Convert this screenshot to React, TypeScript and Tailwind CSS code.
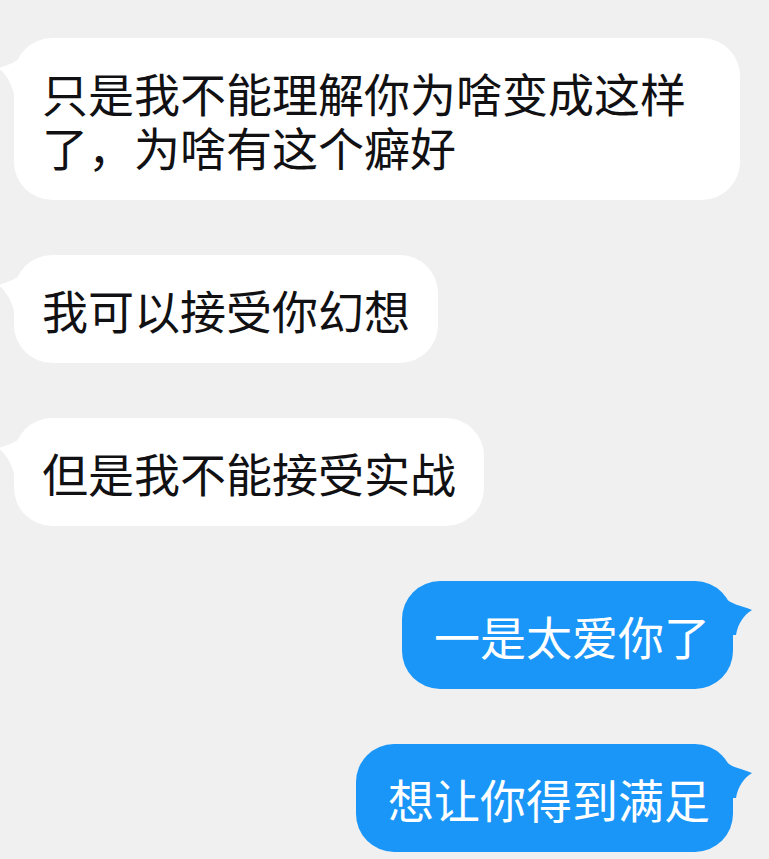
const messages: { id: number; text: string; mine: boolean }[] = [
  { id: 1, text: "只是我不能理解你为啥变成这样了，为啥有这个癖好", mine: false },
  { id: 2, text: "我可以接受你幻想", mine: false },
  { id: 3, text: "但是我不能接受实战", mine: false },
  { id: 4, text: "一是太爱你了", mine: true },
  { id: 5, text: "想让你得到满足", mine: true },
];

const TailLeft = () => (
  <svg
    className="absolute -left-[16px] top-[16px]"
    width="26"
    height="42"
    viewBox="0 0 26 42"
  >
    <path d="M26 2 C18 8 9 12 0 14 C7 19 13 28 16 40 L26 40 Z" fill="#ffffff" />
  </svg>
);

const TailRight = () => (
  <svg
    className="absolute -right-[19px] top-[14px]"
    width="28"
    height="42"
    viewBox="0 0 28 42"
  >
    <path d="M0 2 C8 10 16 10 28 15 C20 20 14 28 12 40 L0 40 Z" fill="#1a96f8" />
  </svg>
);

const Bubble = ({ text, mine }: { text: string; mine: boolean }) => {
  if (mine) {
    return (
      <div className="flex justify-end pr-[36px]">
        <div className="relative max-w-[726px] rounded-[38px] bg-[#1a96f8] pl-[32px] pr-[23px] py-[27px] text-white">
          <TailRight />
          <span className="relative">{text}</span>
        </div>
      </div>
    );
  }
  return (
    <div className="flex justify-start pl-[14px]">
      <div className="relative max-w-[726px] rounded-[38px] bg-white px-[28px] py-[27px] text-[#111114]">
        <TailLeft />
        <span className="relative">{text}</span>
      </div>
    </div>
  );
};

export default function App() {
  return (
    <div
      className="h-[859px] w-[769px] overflow-hidden bg-[#f0f0f0] pt-[38px] text-[46px] leading-[54px]"
      style={{ fontFamily: '"Noto Sans CJK SC", "Noto Sans", sans-serif' }}
    >
      <div className="flex flex-col gap-[55px]">
        {messages.map((m) => (
          <Bubble key={m.id} text={m.text} mine={m.mine} />
        ))}
      </div>
    </div>
  );
}
